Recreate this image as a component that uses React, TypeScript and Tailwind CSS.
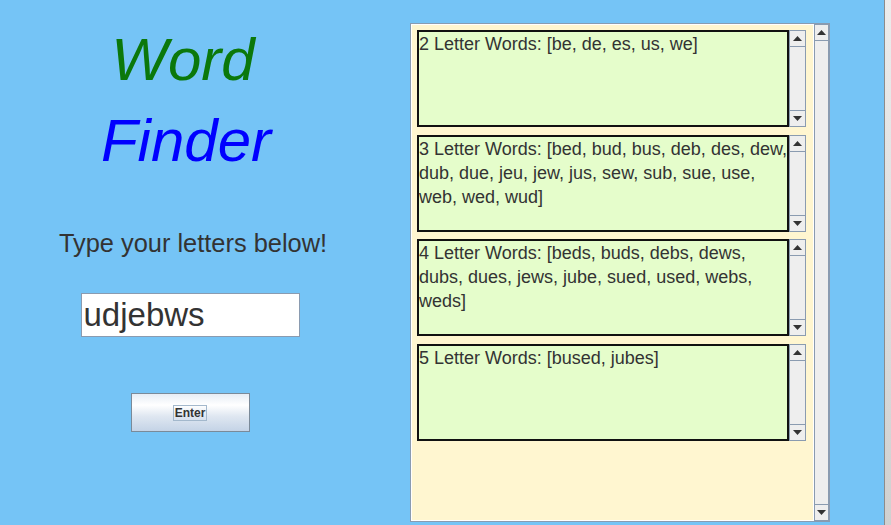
import React from "react";

const groups = [
  { h: "2 Letter Words", words: "be, de, es, us, we" },
  { h: "3 Letter Words", words: "bed, bud, bus, deb, des, dew, dub, due, jeu, jew, jus, sew, sub, sue, use, web, wed, wud" },
  { h: "4 Letter Words", words: "beds, buds, debs, dews, dubs, dues, jews, jube, sued, used, webs, weds" },
  { h: "5 Letter Words", words: "bused, jubes" },
];

function Arrow({ up }: { up?: boolean }) {
  return (
    <svg width="9" height="5" viewBox="0 0 9 5" className="block">
      <polygon points={up ? "4.5,0 9,5 0,5" : "0,0 9,0 4.5,5"} fill="#333333" />
    </svg>
  );
}

function ScrollBar() {
  return (
    <div className="flex flex-col w-[17px] h-full bg-[#eeeeee] border border-[#8a9bb0]">
      <div className="h-[16px] flex items-center justify-center border-b border-[#8a9bb0]">
        <Arrow up />
      </div>
      <div className="flex-1" />
      <div className="h-[16px] flex items-center justify-center border-t border-[#8a9bb0]">
        <Arrow />
      </div>
    </div>
  );
}

export default function App() {
  return (
    <div
      className="flex w-[891px] h-[525px] bg-[#75c4f6] overflow-hidden"
      style={{ fontFamily: '"Liberation Sans", Arial, sans-serif' }}
    >
      <div className="flex flex-1">
        {/* left column */}
        <div className="w-[380px] flex flex-col items-center">
          <div className="mt-[30px] h-[60px] leading-[60px] text-[60px] italic text-[#0b780b] -translate-x-[7px]">
            Word
          </div>
          <div className="mt-[21px] h-[60px] leading-[60px] text-[60px] italic text-[#0000ff] -translate-x-[4px]">
            Finder
          </div>
          <div className="mt-[60px] text-[25.4px] leading-[25px] text-[#333333] translate-x-[3px]">
            Type your letters below!
          </div>
          <input
            readOnly
            defaultValue="udjebws"
            className="mt-[37px] w-[219px] h-[44px] bg-white border border-[#8a9bb0] px-[2px] text-[33px] text-[#333333] outline-none"
            style={{ fontFamily: '"Liberation Sans", Arial, sans-serif' }}
          />
          <button className="mt-[56px] w-[119px] h-[39px] border border-[#7a8a99] bg-[linear-gradient(to_bottom,#e6edf5_0%,#ffffff_30%,#dfe7f1_60%,#c4d3e6_100%)] flex items-center justify-center">
            <span className="border border-[#a3b8cc] px-[1px] text-[12px] leading-[14px] font-bold text-[#333333]">
              Enter
            </span>
          </button>
        </div>

        {/* results panel */}
        <div className="ml-[30px] mt-[23px] w-[420px] h-[499px] border border-[#8a9bb0] bg-[#fff6d0] flex">
          <div className="flex-1 flex flex-col gap-[7.5px] pl-[5px] pr-[7px] pt-[5px] border border-white">
            {groups.map((g) => (
              <div key={g.h} className="flex h-[97px]">
                <div className="w-[372px] border-2 border-[#111111] bg-[#e5fdcb] text-[18px] leading-[24px] text-[#333333] overflow-hidden">
                  {g.h}: [{g.words}]
                </div>
                <ScrollBar />
              </div>
            ))}
          </div>
          <ScrollBar />
        </div>
      </div>
      {/* window edge */}
      <div className="w-[7px] h-full border-l border-[#8c8c8c] bg-[linear-gradient(to_bottom,#ececec,#d0d0d0)]" />
    </div>
  );
}
